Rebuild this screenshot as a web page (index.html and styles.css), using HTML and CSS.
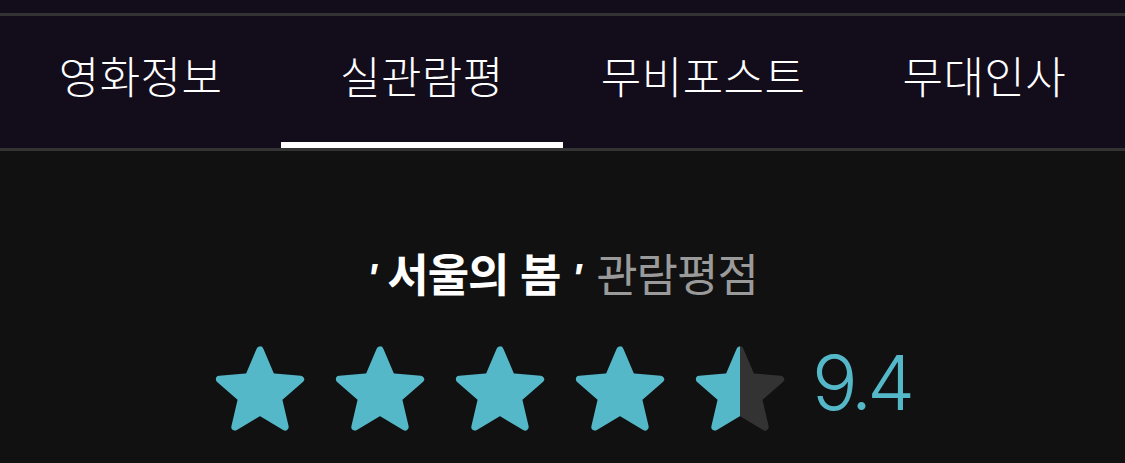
FILE: index.html
```html
<!DOCTYPE html>
<html lang="ko">
<head>
  <meta charset="UTF-8">
  <meta name="viewport" content="width=device-width, initial-scale=1.0">
  <title>서울의 봄 - 실관람평</title>
  <link rel="stylesheet" href="styles.css">
</head>
<body>
  <div class="top-strip"></div>

  <!-- Tab menu -->
  <nav class="tabs">
    <a class="tab">영화정보</a>
    <a class="tab active">실관람평</a>
    <a class="tab">무비포스트</a>
    <a class="tab">무대인사</a>
  </nav>

  <section class="rating">
    <h2 class="rating-title">
      <span class="movie"><i>'</i> 서울의 봄 <i>'</i></span>
      <span class="label">관람평점</span>
    </h2>
    <div class="rating-row">
      <svg class="star" viewBox="1 1 22 21"><use href="#star-full"/></svg>
      <svg class="star" viewBox="1 1 22 21"><use href="#star-full"/></svg>
      <svg class="star" viewBox="1 1 22 21"><use href="#star-full"/></svg>
      <svg class="star" viewBox="1 1 22 21"><use href="#star-full"/></svg>
      <svg class="star" viewBox="1 1 22 21"><use href="#star-half"/></svg>
      <span class="score">9.4</span>
    </div>
  </section>

  <!-- shared star shapes -->
  <svg class="defs" width="0" height="0">
    <defs>
      <linearGradient id="half" x1="0" x2="1" y1="0" y2="0">
        <stop offset="50%" stop-color="#55b8c9"/>
        <stop offset="50%" stop-color="#333333"/>
      </linearGradient>
      <path id="star-shape" d="M12 17.27L18.18 21l-1.64-7.03L22 9.24l-7.19-.61L12 2 9.19 8.63 2 9.24l5.46 4.73L5.82 21z"/>
      <use id="star-full" href="#star-shape" fill="#55b8c9" stroke="#55b8c9" stroke-width="1.8" stroke-linejoin="round"/>
      <use id="star-half" href="#star-shape" fill="url(#half)" stroke="url(#half)" stroke-width="1.8" stroke-linejoin="round"/>
    </defs>
  </svg>
</body>
</html>
```

FILE: styles.css
```css
body {
  margin: 0;
  background-color: #111111;
  font-family: "Noto Sans CJK KR", "Noto Sans", sans-serif;
  color: #fff;
}

.top-strip {
  height: 13px;
  background-color: #130d1b;
  border-bottom: 3px solid #333;
}

.tabs {
  display: grid;
  grid-template-columns: repeat(4, 1fr);
  height: 132px;
  background-color: #130d1b;
  border-bottom: 3px solid #333;
}

.tab {
  display: flex;
  justify-content: center;
  align-items: center;
  padding-bottom: 8px;
  font-size: 44px;
  font-weight: 300;
  letter-spacing: 0.5px;
  color: #fff;
  border-bottom: 6px solid transparent;
}

.tab.active {
  border-bottom-color: #fff;
}

.rating {
  display: flex;
  flex-direction: column;
  align-items: center;
  padding-top: 92px;
}

.rating-title {
  margin: 0;
  font-size: 45px;
  line-height: 60px;
  letter-spacing: -1px;
}

.movie {
  font-weight: 700;
  color: #fff;
}

.movie i {
  font-family: "Liberation Sans", sans-serif;
  font-size: 40px;
}

.label {
  margin-left: 4px;
  font-weight: 400;
  color: #9a9a9a;
}

.rating-row {
  display: flex;
  align-items: center;
  gap: 30px;
  margin-top: 28px;
}

.star {
  width: 90px;
  height: 85px;
}

.score {
  margin-left: -3px;
  margin-bottom: 12px;
  font-family: Inter, "Liberation Sans", sans-serif;
  font-size: 76px;
  font-weight: 300;
  letter-spacing: -5px;
  color: #55b8c9;
}

.defs {
  position: absolute;
}
```
